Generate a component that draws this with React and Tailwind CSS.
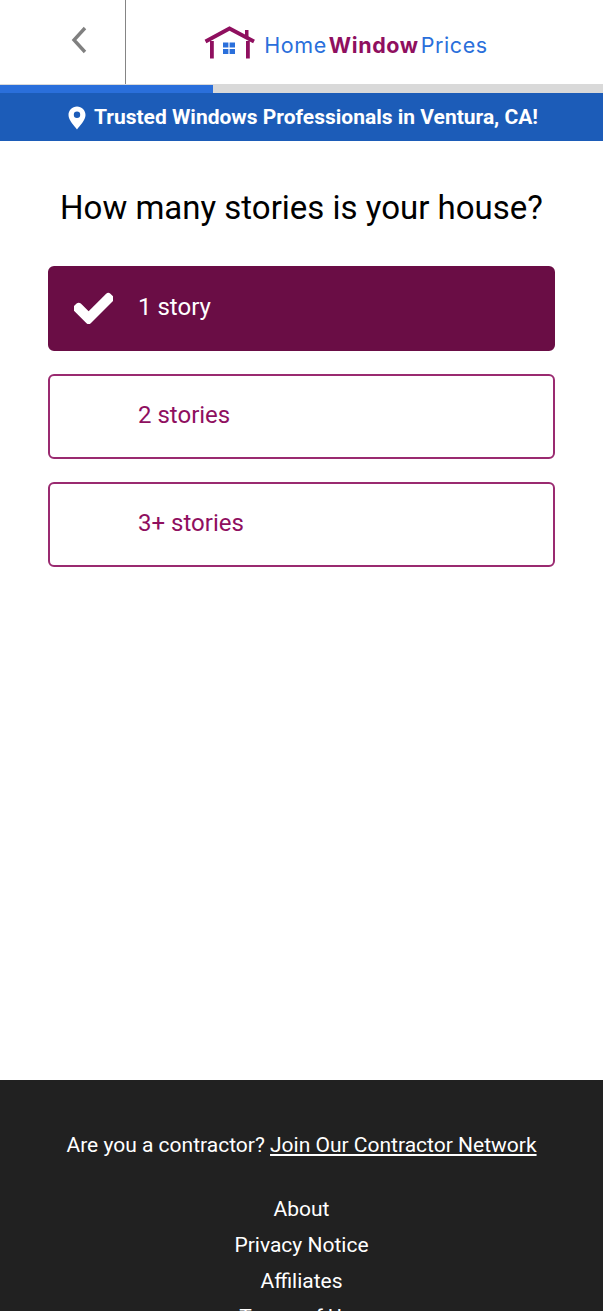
import React from 'react';
import { FaCheck } from 'react-icons/fa';

const options = [
    { label: '1 story', selected: true },
    { label: '2 stories' },
    { label: '3+ stories' },
];

const footerLinks = ['About', 'Privacy Notice', 'Affiliates', 'Terms of Use'];

const Logo = () => (
    <div className="flex items-center">
        <svg width="52" height="33" viewBox="0 0 52 33" className="mr-[8px] mb-[6px]">
            <path d="M1.5 15.5 L25.5 2.5 L50 15.5" fill="none" stroke="#8f0f5f" strokeWidth="3.8" strokeLinejoin="miter" />
            <rect x="41" y="4" width="3.5" height="8" fill="#8f0f5f" />
            <rect x="6" y="15" width="3.8" height="17.5" fill="#8f0f5f" />
            <rect x="42" y="15" width="3.8" height="17.5" fill="#8f0f5f" />
            <rect x="19" y="16.5" width="5.4" height="5" fill="#2a6fdb" />
            <rect x="25.6" y="16.5" width="5.4" height="5" fill="#2a6fdb" />
            <rect x="19" y="23" width="5.4" height="5" fill="#2a6fdb" />
            <rect x="25.6" y="23" width="5.4" height="5" fill="#2a6fdb" />
        </svg>
        <div className="font-['Inter',sans-serif] text-[21.5px] tracking-[0.6px] leading-none flex gap-[2px] mt-[1px]">
            <span className="text-[#2a6fdb]">Home</span>
            <span className="font-bold text-[#8f0f5f]">Window</span>
            <span className="text-[#2a6fdb]">Prices</span>
        </div>
    </div>
);

export default function App() {
    return (
        <div className="h-[1311px] overflow-hidden flex flex-col bg-white font-['Roboto',sans-serif]">
            <header className="h-[84px] flex shrink-0">
                <div className="w-[126px] border-r-[1.5px] border-[#858585] flex justify-start items-start pt-[22px] pl-[70px]">
                    <svg width="18" height="36" viewBox="0 0 18 36">
                        <path d="M15 6 L4 18 L15 30" fill="none" stroke="#808080" strokeWidth="3.4" />
                    </svg>
                </div>
                <div className="flex-1 flex items-center justify-center pr-[37px] pt-[7px]">
                    <Logo />
                </div>
            </header>

            <div className="h-[9px] bg-[#d9d9d9] shrink-0 flex items-end">
                <div className="h-[8px] w-[213px] bg-[#2a6fdb]" />
            </div>

            <div className="h-[48px] bg-[#1c5cb8] text-white flex items-center justify-center gap-[8px] shrink-0 pl-[3px] pt-[2px]">
                <svg width="18" height="24" viewBox="0 0 18 24">
                    <path d="M9 0.5 C4.2 0.5 0.5 4.2 0.5 9 C0.5 14.5 6.5 20 9 23.5 C11.5 20 17.5 14.5 17.5 9 C17.5 4.2 13.8 0.5 9 0.5 Z M9 12 A3.2 3.2 0 1 1 9 5.6 A3.2 3.2 0 0 1 9 12 Z" fill="#fff" fillRule="evenodd" />
                </svg>
                <span className="text-[21px] font-bold">Trusted Windows Professionals in Ventura, CA!</span>
            </div>

            <main className="flex-1 px-[48px]">
                <h1 className="text-[33px] leading-[40px] text-black text-center mt-[47px] mb-[38px] whitespace-nowrap">How many stories is your house?</h1>
                <div className="flex flex-col gap-[23px]">
                    {options.map((option) => (
                        <button
                            key={option.label}
                            className={`h-[85px] rounded-[6px] border-2 flex items-center text-[24px] text-left pb-[3px] ${option.selected ? 'bg-[#6a0d45] border-[#6a0d45] text-white' : 'bg-white border-[#9a2a70] text-[#8f0f5f]'}`}
                        >
                            <span className="w-[88px] flex justify-start pl-[24px] shrink-0 pt-[2px]">
                                {option.selected && <FaCheck size={39} color="#fff" strokeWidth={28} />}
                            </span>
                            {option.label}
                        </button>
                    ))}
                </div>
            </main>

            <footer className="h-[231px] shrink-0 bg-[#212121] text-white text-center text-[21px] overflow-hidden">
                <p className="mt-[50px] leading-[30px]">
                    Are you a contractor? <span className="underline">Join Our Contractor Network</span>
                </p>
                <ul className="mt-[34px]">
                    {footerLinks.map((link) => (
                        <li key={link} className="h-[36px] leading-[30px]">{link}</li>
                    ))}
                </ul>
            </footer>
        </div>
    );
}
